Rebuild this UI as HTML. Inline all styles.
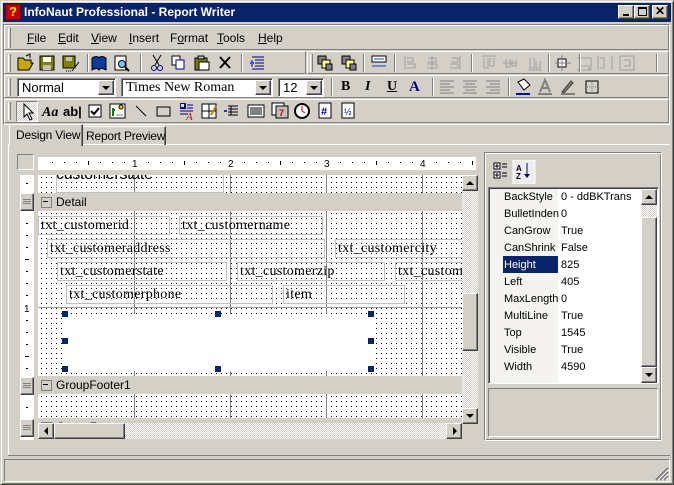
<!DOCTYPE html>
<html><head><meta charset="utf-8"><style>
*{margin:0;padding:0;box-sizing:border-box}
body{width:674px;height:485px;background:#d4d0c8;position:relative;overflow:hidden;font-family:"Liberation Sans",sans-serif;font-size:11px;color:#000}
.a{position:absolute}
.rz{border-top:1px solid #fff;border-left:1px solid #fff;border-right:1px solid #808080;border-bottom:1px solid #808080}
.sk{border-top:1px solid #808080;border-left:1px solid #808080;border-right:1px solid #fff;border-bottom:1px solid #fff}
.btn{background:#d4d0c8;border-top:1px solid #fff;border-left:1px solid #fff;border-right:1px solid #404040;border-bottom:1px solid #404040;box-shadow:inset -1px -1px 0 #808080}
.grip{width:3px;height:18px;border-left:1px solid #fff;border-right:1px solid #808080}
.sep{width:2px;height:18px;border-left:1px solid #808080;border-right:1px solid #fff}
.combo{position:absolute;height:19px;background:#fff;border-top:1px solid #808080;border-left:1px solid #808080;border-right:1px solid #fff;border-bottom:1px solid #fff;box-shadow:inset 1px 1px 0 #404040;font-size:13px;padding:1px 0 0 4px;white-space:nowrap}
.dd{position:absolute;right:1px;top:1px;width:16px;height:15px}
.tri{width:0;height:0;border-left:4px solid transparent;border-right:4px solid transparent;border-top:4px solid #000;position:absolute;left:3px;top:5px}
.dots{background-color:#fff;background-image:radial-gradient(circle at 1.5px 1.5px,#000 0.6px,transparent 0.7px);background-size:5px 5px;background-position:2px 1px}
.vl{position:absolute;top:0;bottom:0;width:1px;background:#808080}
.band{position:absolute;left:0;width:424px;height:18px;background:#d4d0c8;font-size:12px;padding:2px 0 0 18px}
.band:before{content:"";position:absolute;left:3px;top:4px;width:9px;height:9px;border:1px solid #808080;background:#d4d0c8}
.band:after{content:"";position:absolute;left:5px;top:8px;width:5px;height:1px;background:#000}
.fld{position:absolute;height:19px;border:1px solid #c0c0c0;font-family:"Liberation Serif",serif;font-size:14px;letter-spacing:0.3px;line-height:17px;padding-left:2px;white-space:nowrap;overflow:hidden}
.h{position:absolute;width:6px;height:6px;background:#0a246a}
.prow{position:absolute;left:0;width:170px;height:17px;font-size:11px}
.prow span{position:absolute;top:2px}
</style></head><body>
<div class="a" style="left:0;top:0;width:674px;height:485px;border-top:1px solid #d4d0c8;border-left:1px solid #d4d0c8;border-right:1px solid #404040;border-bottom:1px solid #404040;box-shadow:inset 1px 1px 0 #fff,inset -1px -1px 0 #808080"></div>
<div class="a" style="left:3px;top:3px;width:668px;height:19px;background:#0a246a"></div>
<div class="a" style="left:5px;top:4px;width:16px;height:16px;background:#c00000;border:1px solid #800000"><div style="color:#ff0;font-weight:bold;font-size:13px;line-height:14px;text-align:center">?</div></div>
<div class="a" style="left:24px;top:5px;color:#fff;font-weight:bold;font-size:12px">InfoNaut Professional - Report Writer</div>
<div class="a btn" style="left:618px;top:5px;width:16px;height:14px"><div class="a" style="left:4px;top:8px;width:6px;height:2px;background:#000"></div></div>
<div class="a btn" style="left:634px;top:5px;width:16px;height:14px"><div class="a" style="left:3px;top:1px;width:9px;height:9px;border:1px solid #000;border-top-width:2px"></div></div>
<div class="a btn" style="left:652px;top:5px;width:16px;height:14px;font-weight:bold;font-size:12px;line-height:11px;text-align:center">✕</div>
<div class="a sk" style="left:3px;top:24px;width:667px;height:101px"></div>
<div class="a rz" style="left:4px;top:25px;width:665px;height:25px"></div>
<div class="a rz" style="left:4px;top:51px;width:302px;height:23px"></div>
<div class="a rz" style="left:307px;top:51px;width:362px;height:23px"></div>
<div class="a rz" style="left:4px;top:75px;width:665px;height:23px"></div>
<div class="a rz" style="left:4px;top:99px;width:665px;height:24px"></div>
<div class="a grip" style="left:8px;top:28px;height:20px"></div>
<div class="a grip" style="left:8px;top:54px"></div>
<div class="a grip" style="left:310px;top:54px"></div>
<div class="a grip" style="left:8px;top:78px"></div>
<div class="a grip" style="left:8px;top:102px"></div>
<div class="a" style="top:31px;left:27px;font-size:12px"><u>F</u>ile</div>
<div class="a" style="top:31px;left:58px;font-size:12px"><u>E</u>dit</div>
<div class="a" style="top:31px;left:91px;font-size:12px"><u>V</u>iew</div>
<div class="a" style="top:31px;left:129px;font-size:12px"><u>I</u>nsert</div>
<div class="a" style="top:31px;left:170px;font-size:12px">F<u>o</u>rmat</div>
<div class="a" style="top:31px;left:217px;font-size:12px"><u>T</u>ools</div>
<div class="a" style="top:31px;left:258px;font-size:12px"><u>H</u>elp</div>
<svg class="a" style="left:0;top:52px" width="674" height="22">
<g stroke-width="1">
<path d="M18 6h5l2 2h6v3h2l-4 7H18z" fill="#c8a800" stroke="#000"/><path d="M26 4l4 -2v4" fill="none" stroke="#000"/>
<rect x="40" y="4" width="14" height="14" fill="#808000" stroke="#000"/><rect x="43" y="5" width="8" height="5" fill="#fff"/><rect x="43" y="13" width="8" height="5" fill="#c0c0c0"/>
<rect x="63" y="4" width="12" height="12" fill="#808000" stroke="#000"/><rect x="66" y="5" width="6" height="4" fill="#c0c0c0"/><path d="M72 19l7-9" stroke="#000"/><path d="M66 19h1M68 19h1M70 19h1" stroke="#000"/>
<path d="M92 6c3-2 6-2 7 0c1-2 4-2 7 0v12c-3-2-6-2-7 0c-1-2-4-2-7 0z" fill="#0a3a9a" stroke="#000"/>
<rect x="115" y="4" width="11" height="14" fill="#fff" stroke="#000"/><circle cx="122" cy="12" r="3.5" fill="#80c0ff" stroke="#000"/><path d="M125 15l4 4" stroke="#000" stroke-width="2"/>
<path d="M153 3l6 10M161 3l-6 10" stroke="#000"/><circle cx="154" cy="16" r="2.5" fill="none" stroke="#00008a"/><circle cx="160" cy="16" r="2.5" fill="none" stroke="#00008a"/>
<rect x="172" y="4" width="8" height="9" fill="#fff" stroke="#000"/><rect x="176" y="8" width="8" height="9" fill="#fff" stroke="#00008a"/>
<rect x="195" y="6" width="12" height="12" fill="#808000" stroke="#000"/><rect x="199" y="10" width="10" height="8" fill="#fff" stroke="#000"/><rect x="198" y="4" width="6" height="3" fill="#c0c0c0" stroke="#000"/>
<path d="M220 5l10 11M230 5l-10 11" stroke="#000" stroke-width="2"/>
<path d="M252 5h12M255 8h9M255 11h9M255 14h9M252 17h12M252 8v7" stroke="#00008a"/><path d="M250 11h4" stroke="#2060ff" stroke-width="2"/>
<rect x="318" y="4" width="8" height="8" fill="#808080" stroke="#000"/><rect x="322" y="8" width="8" height="8" fill="#ffff80" stroke="#000"/><rect x="326" y="12" width="6" height="6" fill="#808080" stroke="#000"/>
<rect x="342" y="4" width="8" height="8" fill="#808080" stroke="#000"/><rect x="346" y="8" width="8" height="8" fill="#ffff80" stroke="#000"/><rect x="350" y="12" width="6" height="6" fill="#808080" stroke="#000"/>
<rect x="372" y="4" width="14" height="6" fill="#fff" stroke="#000"/><path d="M374 7h10M372 14h14" stroke="#0040c0"/>
<g stroke="#a0a0a0" fill="none"><path d="M405 4v14M407 6h6v4h-6M407 12h8v4h-8"/><path d="M432 4v14M428 6h8v4h-8M427 12h10v4h-10"/><path d="M460 4v14M452 6h6v4h-6M450 12h8v4h-8"/>
<path d="M482 4h14M484 6v10h4V6M490 6v8h4V6"/><path d="M503 11h14M506 7v8h4V7M512 8v6h4V8"/><path d="M528 18h14M530 6v10h4V6M536 9v7h4V9"/>
<path d="M577 6h14v12H577M579 14h10v4"/><path d="M598 4v14M612 4v14M600 6h4v10h-4"/><path d="M620 4h14v14h-14zM624 8h6v6h-6"/></g>
<rect x="558" y="7" width="8" height="8" fill="#fff" stroke="#000"/><path d="M555 11h16M562 3v16" stroke="#808080"/>
</g></svg>
<div class="a sep" style="left:87px;top:54px"></div>
<div class="a sep" style="left:140px;top:54px"></div>
<div class="a sep" style="left:241px;top:54px"></div>
<div class="a sep" style="left:363px;top:54px"></div>
<div class="a sep" style="left:394px;top:54px"></div>
<div class="a sep" style="left:471px;top:54px"></div>
<div class="a sep" style="left:548px;top:54px"></div>
<div class="a sep" style="left:579px;top:54px"></div>
<div class="a sep" style="left:656px;top:54px"></div>
<div class="combo" style="left:17px;top:78px;width:99px">Normal<div class="dd btn"><div class="tri"></div></div></div>
<div class="combo" style="left:121px;top:78px;width:152px;font-family:'Liberation Serif',serif;font-size:14px">Times New Roman<div class="dd btn"><div class="tri"></div></div></div>
<div class="combo" style="left:278px;top:78px;width:46px">12<div class="dd btn"><div class="tri"></div></div></div>
<div class="a sep" style="left:331px;top:78px"></div>
<div class="a" style="left:341px;top:79px;font-family:'Liberation Serif',serif;font-weight:bold;font-size:14px">B</div>
<div class="a" style="left:365px;top:79px;font-family:'Liberation Serif',serif;font-weight:bold;font-style:italic;font-size:14px">I</div>
<div class="a" style="left:387px;top:79px;font-family:'Liberation Serif',serif;font-weight:bold;font-size:14px;text-decoration:underline">U</div>
<div class="a" style="left:409px;top:79px;font-family:'Liberation Serif',serif;font-weight:bold;font-size:15px;color:#00008a">A</div>
<div class="a sep" style="left:432px;top:78px"></div>
<svg class="a" style="left:0;top:76px" width="674" height="22"><g stroke="#808080">
<path d="M440 5h14M440 8h10M440 11h14M440 14h10M440 17h14"/><path d="M463 5h14M465 8h10M463 11h14M465 14h10M463 17h14"/><path d="M486 5h14M490 8h10M486 11h14M490 14h10M486 17h14"/></g>
<path d="M518 6l6-3 6 6-6 5z" fill="#fff" stroke="#000"/><path d="M516 18h14" stroke="#0000c0" stroke-width="2"/>
<path d="M540 16l5-12 5 12M542 12h6" fill="none" stroke="#808080" stroke-width="2"/><path d="M538 18h14" stroke="#808080" stroke-width="2"/>
<path d="M562 16l9-11 2 2-9 10z" fill="#808080" stroke="#404040"/><path d="M561 18h14" stroke="#808080" stroke-width="2"/>
<rect x="586" y="5" width="12" height="12" fill="none" stroke="#000"/><path d="M592 6v10M587 11h10" stroke="#808080" stroke-dasharray="1 1"/>
</svg>
<div class="a sep" style="left:508px;top:78px"></div>
<div class="a" style="left:16px;top:101px;width:22px;height:21px;border-top:1px solid #808080;border-left:1px solid #808080;border-right:1px solid #fff;border-bottom:1px solid #fff;background:repeating-conic-gradient(#fff 0 25%,#d4d0c8 0 50%) 0 0/2px 2px"></div>
<svg class="a" style="left:0;top:100px" width="674" height="22">
<path d="M24 4v13l3-3 3 6 2-1-3-6h4z" fill="#fff" stroke="#000"/>
<text x="42" y="16" font-family="Liberation Serif" font-style="italic" font-weight="bold" font-size="14">Aa</text>
<text x="63" y="16" font-family="Liberation Sans" font-weight="bold" font-size="13">ab|</text>
<rect x="89" y="5" width="12" height="12" fill="#fff" stroke="#000"/><path d="M91 11l3 3 5-6" fill="none" stroke="#000" stroke-width="2"/>
<rect x="110" y="4" width="15" height="14" fill="#fff" stroke="#000"/><path d="M113 16v-8M112 10h3" stroke="#008000" stroke-width="2"/><circle cx="121" cy="7" r="2" fill="#ffd000" stroke="#000"/><path d="M116 15h7" stroke="#808080"/>
<path d="M136 6l10 10" stroke="#000"/>
<rect x="157" y="7" width="13" height="9" fill="none" stroke="#000"/>
<rect x="180" y="3" width="6" height="6" fill="#0000c0"/><rect x="181" y="4" width="3" height="3" fill="#ff0"/><path d="M187 5h6M187 8h6M180 11h13M180 14h8" stroke="#00008a"/><text x="186" y="20" fill="#e00000" font-family="Liberation Serif" font-style="italic" font-size="11">A</text>
<rect x="202" y="4" width="14" height="14" fill="#fff" stroke="#000"/><path d="M209 4v14M202 11h14" stroke="#000"/><path d="M211 15l5-9" stroke="#c08000" stroke-width="2"/>
<path d="M228 6h10M228 9h10M228 12h10M228 15h10M231 6v9" stroke="#000"/><path d="M224 11h3" stroke="#0040ff" stroke-width="2"/>
<rect x="248" y="5" width="16" height="12" fill="#fff" stroke="#000"/><path d="M251 7v8M253 7v8M255 7v8M257 7v8M259 7v8M261 7v8" stroke="#000"/>
<rect x="272" y="3" width="12" height="12" fill="#fff" stroke="#000"/><rect x="276" y="6" width="12" height="12" fill="#c0c0c0" stroke="#000"/><text x="279" y="16" fill="#c00000" font-size="9" font-weight="bold">7</text>
<circle cx="302" cy="11" r="7" fill="#fff" stroke="#000" stroke-width="2"/><path d="M302 11v-5M302 11l3 2" stroke="#c00000"/>
<rect x="319" y="3" width="12" height="15" fill="#fff" stroke="#000"/><text x="321" y="15" fill="#00008a" font-size="11" font-weight="bold">#</text>
<rect x="342" y="3" width="12" height="15" fill="#fff" stroke="#000"/><text x="344" y="15" fill="#00008a" font-size="9">½</text>
</svg>
<div class="a" style="left:8px;top:144px;width:662px;height:1px;background:#fff"></div>
<div class="a" style="left:8px;top:144px;width:1px;height:311px;background:#fff"></div>
<div class="a" style="left:8px;top:455px;width:662px;height:1px;background:#808080"></div>
<div class="a" style="left:82px;top:126px;width:84px;height:19px;border-top:1px solid #fff;border-left:1px solid #fff;border-right:1px solid #404040;box-shadow:inset -1px 0 0 #808080;font-size:12px;padding:2px 0 0 3px;white-space:nowrap;letter-spacing:-0.2px">Report Preview</div>
<div class="a" style="left:9px;top:124px;width:74px;height:22px;background:#d4d0c8;border-top:1px solid #fff;border-left:1px solid #fff;border-right:1px solid #404040;box-shadow:inset -1px 0 0 #808080;font-size:12px;padding:3px 0 0 6px;white-space:nowrap;letter-spacing:-0.2px">Design View</div>
<div class="a" style="left:17px;top:154px;width:17px;height:16px;border-top:1px solid #808080;border-left:1px solid #808080;border-right:1px solid #fff;border-bottom:1px solid #fff"></div>
<div class="a" style="left:38px;top:157px;width:438px;height:13px;background:#fff;overflow:hidden">
<svg width="438" height="13"><g fill="#000">
<rect x="14" y="5" width="1" height="1"/><rect x="26" y="5" width="1" height="1"/><rect x="38" y="5" width="1" height="1"/><rect x="50" y="4" width="1" height="4"/><rect x="62" y="5" width="1" height="1"/><rect x="74" y="5" width="1" height="1"/><rect x="86" y="5" width="1" height="1"/>
<rect x="110" y="5" width="1" height="1"/><rect x="122" y="5" width="1" height="1"/><rect x="134" y="5" width="1" height="1"/><rect x="146" y="4" width="1" height="4"/><rect x="158" y="5" width="1" height="1"/><rect x="170" y="5" width="1" height="1"/><rect x="182" y="5" width="1" height="1"/>
<rect x="206" y="5" width="1" height="1"/><rect x="218" y="5" width="1" height="1"/><rect x="230" y="5" width="1" height="1"/><rect x="242" y="4" width="1" height="4"/><rect x="254" y="5" width="1" height="1"/><rect x="266" y="5" width="1" height="1"/><rect x="278" y="5" width="1" height="1"/>
<rect x="302" y="5" width="1" height="1"/><rect x="314" y="5" width="1" height="1"/><rect x="326" y="5" width="1" height="1"/><rect x="338" y="4" width="1" height="4"/><rect x="350" y="5" width="1" height="1"/><rect x="362" y="5" width="1" height="1"/><rect x="374" y="5" width="1" height="1"/>
<rect x="398" y="5" width="1" height="1"/><rect x="410" y="5" width="1" height="1"/><rect x="422" y="5" width="1" height="1"/><rect x="434" y="4" width="1" height="4"/></g>
<g font-size="10" font-family="Liberation Sans"><text x="94" y="10">1</text><text x="190" y="10">2</text><text x="286" y="10">3</text><text x="382" y="10">4</text></g></svg></div>
<div class="a" style="left:20px;top:175px;width:14px;height:265px;background:#fff"></div>
<svg class="a" style="left:20px;top:175px" width="14" height="265"><g fill="#000">
<rect x="6" y="8" width="2" height="1"/><rect x="6" y="48" width="2" height="1"/><rect x="6" y="60" width="2" height="1"/><rect x="6" y="72" width="2" height="1"/><rect x="5" y="84" width="4" height="1"/><rect x="6" y="96" width="2" height="1"/><rect x="6" y="108" width="2" height="1"/><rect x="6" y="120" width="2" height="1"/>
<rect x="6" y="145" width="2" height="1"/><rect x="6" y="157" width="2" height="1"/><rect x="6" y="169" width="2" height="1"/><rect x="5" y="181" width="4" height="1"/><rect x="6" y="193" width="2" height="1"/><rect x="6" y="232" width="2" height="1"/></g>
<text x="4" y="137" font-size="10">1</text></svg>
<div class="a btn" style="left:20px;top:193px;width:14px;height:18px"><div class="a" style="left:2px;top:5px;width:8px;height:5px;border-top:1px solid #808080;border-bottom:1px solid #808080"></div><div class="a" style="left:2px;top:7px;width:8px;height:1px;background:#808080"></div></div>
<div class="a btn" style="left:20px;top:377px;width:14px;height:18px"><div class="a" style="left:2px;top:5px;width:8px;height:5px;border-top:1px solid #808080;border-bottom:1px solid #808080"></div><div class="a" style="left:2px;top:7px;width:8px;height:1px;background:#808080"></div></div>
<div class="a btn" style="left:20px;top:419px;width:14px;height:18px"><div class="a" style="left:2px;top:5px;width:8px;height:5px;border-top:1px solid #808080;border-bottom:1px solid #808080"></div><div class="a" style="left:2px;top:7px;width:8px;height:1px;background:#808080"></div></div>
<div class="a" style="left:38px;top:175px;width:424px;height:248px;overflow:hidden;background:#fff">
 <div class="a dots" style="left:0;top:0;width:424px;height:18px;overflow:hidden"><div class="vl" style="left:96px"></div><div class="vl" style="left:192px"></div><div class="vl" style="left:288px"></div><div class="vl" style="left:384px"></div>
 <div class="a" style="left:18px;top:-9px;font-size:16px;letter-spacing:-0.3px">customerstate</div><div class="a" style="left:18px;top:-2px;width:168px;height:20px;border:1px solid #c0c0c0;border-top:none"></div></div>
 <div class="band" style="top:18px">Detail</div>
 <div class="a dots" style="left:0;top:36px;width:424px;height:165px">
  <div class="vl" style="left:96px"></div><div class="vl" style="left:192px"></div><div class="vl" style="left:288px"></div><div class="vl" style="left:384px"></div>
  <div class="a" style="left:0;top:96px;width:424px;height:1px;background:#a0a0a0"></div>
  <div class="fld" style="left:0;top:5px;width:132px">txt_customerid</div>
  <div class="fld" style="left:141px;top:5px;width:144px">txt_customername</div>
  <div class="fld" style="left:9px;top:28px;width:278px">txt_customeraddress</div>
  <div class="fld" style="left:297px;top:28px;width:140px">txt_customercity</div>
  <div class="fld" style="left:19px;top:51px;width:170px">txt_customerstate</div>
  <div class="fld" style="left:199px;top:51px;width:148px">txt_customerzip</div>
  <div class="fld" style="left:357px;top:51px;width:80px">txt_custom</div>
  <div class="fld" style="left:28px;top:74px;width:207px">txt_customerphone</div>
  <div class="fld" style="left:245px;top:74px;width:122px">item</div>
  <div class="a" style="left:27px;top:103px;width:307px;height:57px;background:#fff"></div>
  <div class="h" style="left:24px;top:100px"></div><div class="h" style="left:177px;top:100px"></div><div class="h" style="left:330px;top:100px"></div>
  <div class="h" style="left:24px;top:127px"></div><div class="h" style="left:330px;top:127px"></div>
  <div class="h" style="left:24px;top:155px"></div><div class="h" style="left:177px;top:155px"></div><div class="h" style="left:330px;top:155px"></div>
 </div>
 <div class="band" style="top:201px">GroupFooter1</div>
 <div class="a dots" style="left:0;top:219px;width:424px;height:24px"><div class="vl" style="left:96px"></div><div class="vl" style="left:192px"></div><div class="vl" style="left:288px"></div><div class="vl" style="left:384px"></div></div>
 <div class="band" style="top:243px">GroupFooter</div>
</div>
<div class="a" style="left:462px;top:175px;width:16px;height:248px;background:repeating-conic-gradient(#fff 0 25%,#d4d0c8 0 50%) 0 0/2px 2px"></div>
<div class="a btn" style="left:462px;top:175px;width:16px;height:16px"><div class="a" style="left:3px;top:5px;border-left:4px solid transparent;border-right:4px solid transparent;border-bottom:4px solid #000"></div></div>
<div class="a btn" style="left:462px;top:293px;width:16px;height:58px"></div>
<div class="a btn" style="left:462px;top:408px;width:16px;height:16px"><div class="tri" style="left:3px;top:5px"></div></div>
<div class="a" style="left:38px;top:423px;width:424px;height:16px;background:repeating-conic-gradient(#fff 0 25%,#d4d0c8 0 50%) 0 0/2px 2px"></div>
<div class="a btn" style="left:38px;top:423px;width:16px;height:16px"><div class="a" style="left:5px;top:3px;border-top:4px solid transparent;border-bottom:4px solid transparent;border-right:4px solid #000"></div></div>
<div class="a btn" style="left:54px;top:423px;width:71px;height:16px"></div>
<div class="a btn" style="left:446px;top:423px;width:16px;height:16px"><div class="a" style="left:6px;top:3px;border-top:4px solid transparent;border-bottom:4px solid transparent;border-left:4px solid #000"></div></div>
<div class="a" style="left:484px;top:152px;width:178px;height:289px;border-top:1px solid #808080;border-left:1px solid #808080;border-right:1px solid #fff;border-bottom:1px solid #fff;box-shadow:inset 1px 1px 0 #fff,inset -1px -1px 0 #808080"></div>
<svg class="a" style="left:492px;top:160px" width="50" height="24">
<rect x="2" y="3" width="6" height="6" fill="#fff" stroke="#000"/><rect x="2" y="12" width="6" height="6" fill="#fff" stroke="#000"/><path d="M3 6h4M5 4v4M3 15h4M5 13v4M10 4h5M10 7h5M10 13h5M10 16h5" stroke="#000"/>
<rect x="21" y="0" width="22" height="24" fill="#eee" stroke="#fff"/>
<text x="24" y="11" font-size="8" font-weight="bold">A</text><text x="24" y="19" font-size="8" font-weight="bold">Z</text><path d="M35 3v13" stroke="#00008a"/><path d="M32 14l3 4 3-4z" fill="#00008a"/>
</svg>
<div class="a sk" style="left:488px;top:187px;width:171px;height:197px;background:#fff;box-shadow:inset 1px 1px 0 #404040">
 <div class="a" style="left:1px;top:1px;width:13px;height:194px;background:#f4f3f0"></div>
 <div class="a" style="left:14px;top:1px;width:55px;height:194px;background:#f4f3f0"></div>
 <div class="prow" style="top:1px"><span style="left:15px">BackStyle</span><span style="left:72px">0 - ddBKTrans</span></div>
 <div class="prow" style="top:18px"><span style="left:15px">BulletInden</span><span style="left:72px">0</span></div>
 <div class="prow" style="top:35px"><span style="left:15px">CanGrow</span><span style="left:72px">True</span></div>
 <div class="prow" style="top:52px"><span style="left:15px">CanShrink</span><span style="left:72px">False</span></div>
 <div class="a" style="left:14px;top:68px;width:55px;height:17px;background:#0a246a"></div>
 <div class="prow" style="top:69px"><span style="left:15px;color:#fff">Height</span><span style="left:72px">825</span></div>
 <div class="prow" style="top:86px"><span style="left:15px">Left</span><span style="left:72px">405</span></div>
 <div class="prow" style="top:103px"><span style="left:15px">MaxLength</span><span style="left:72px">0</span></div>
 <div class="prow" style="top:120px"><span style="left:15px">MultiLine</span><span style="left:72px">True</span></div>
 <div class="prow" style="top:137px"><span style="left:15px">Top</span><span style="left:72px">1545</span></div>
 <div class="prow" style="top:154px"><span style="left:15px">Visible</span><span style="left:72px">True</span></div>
 <div class="prow" style="top:171px"><span style="left:15px">Width</span><span style="left:72px">4590</span></div>
 <div class="a" style="left:152px;top:1px;width:16px;height:194px;background:repeating-conic-gradient(#fff 0 25%,#d4d0c8 0 50%) 0 0/2px 2px"></div>
 <div class="a btn" style="left:152px;top:1px;width:16px;height:16px"><div class="a" style="left:3px;top:5px;border-left:4px solid transparent;border-right:4px solid transparent;border-bottom:4px solid #000"></div></div>
 <div class="a btn" style="left:152px;top:29px;width:16px;height:150px"></div>
 <div class="a btn" style="left:152px;top:179px;width:16px;height:16px"><div class="tri" style="left:3px;top:5px"></div></div>
</div>
<div class="a sk" style="left:488px;top:388px;width:170px;height:49px"></div>
<div class="a sk" style="left:4px;top:459px;width:666px;height:23px"></div>
<svg class="a" style="left:655px;top:467px" width="14" height="14"><path d="M13 1L1 13M13 5L5 13M13 9L9 13" stroke="#808080" stroke-width="2"/><path d="M13 3L3 13M13 7L7 13M13 11L11 13" stroke="#fff"/></svg>
</body></html>
